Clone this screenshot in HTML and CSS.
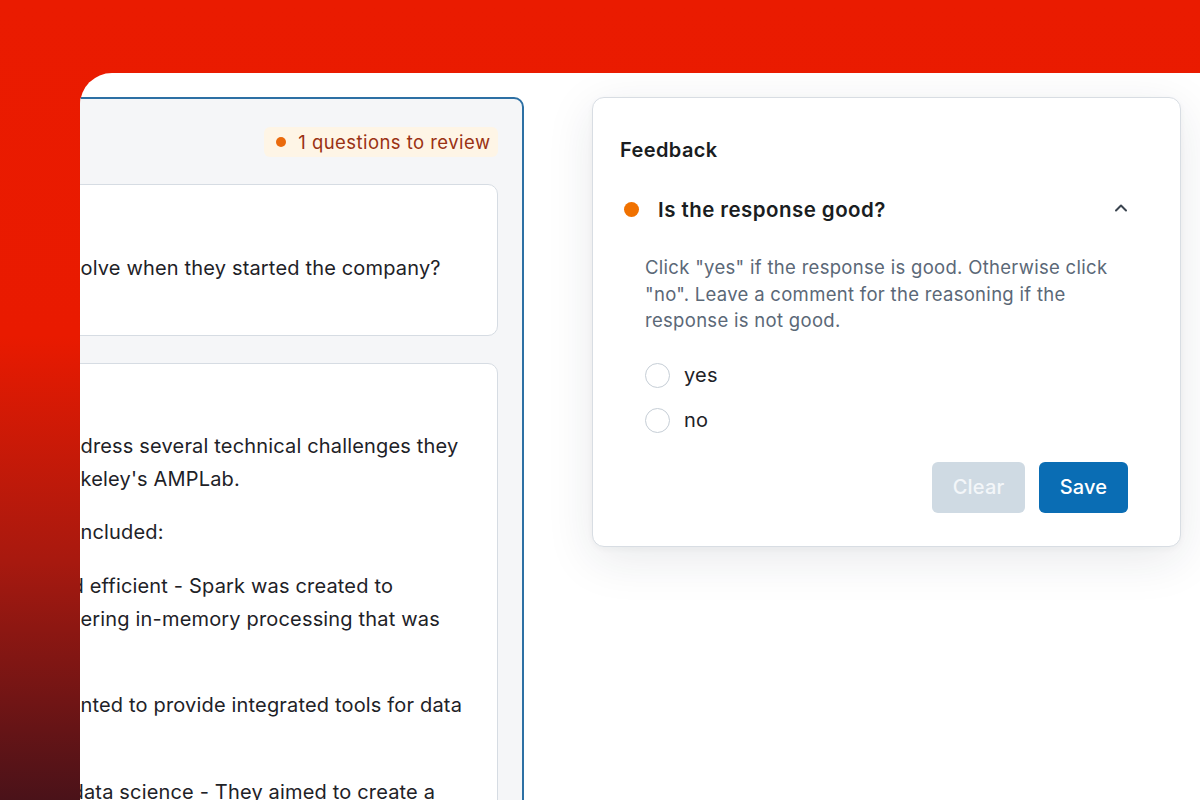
FILE: index.html
```html
<!DOCTYPE html>
<html lang="en">
<head>
<meta charset="utf-8">
<title>Feedback review</title>
<link rel="stylesheet" href="styles.css">
</head>
<body>
<div class="window">
  <section class="review-panel">
    <div class="review-head">
      <span class="badge"><span class="badge-dot"></span>1 questions to review</span>
    </div>
    <div class="card card-question">
      <p class="ln">olve when they started the company?</p>
    </div>
    <div class="card card-answer">
      <p class="para"><span class="ln">dress several technical challenges they</span><span class="ln">keley's AMPLab.</span></p>
      <p class="para"><span class="ln">ncluded:</span></p>
      <p class="para"><span class="ln cut">d efficient - Spark was created to</span><span class="ln">ering in-memory processing that was</span><span class="ln"></span></p>
      <p class="para"><span class="ln">nted to provide integrated tools for data</span><span class="ln"></span></p>
      <p class="para"><span class="ln cut">data science - They aimed to create a</span></p>
    </div>
  </section>

  <section class="feedback-panel">
    <h2 class="fb-title">Feedback</h2>
    <div class="fb-question">
      <span class="q-dot"></span>
      <span class="q-text">Is the response good?</span>
      <svg class="chevron" width="14" height="9" viewBox="0 0 14 9" aria-hidden="true"><path d="M2 7.5 L7 2.5 L12 7.5" fill="none" stroke="#3b4550" stroke-width="2" stroke-linecap="round" stroke-linejoin="round"/></svg>
    </div>
    <div class="fb-body">
      <p class="fb-desc">Click "yes" if the response is good. Otherwise click "no". Leave a comment for the reasoning if the response is not good.</p>
      <div class="options">
        <label class="opt"><span class="radio"></span>yes</label>
        <label class="opt"><span class="radio"></span>no</label>
      </div>
      <div class="actions">
        <button class="btn btn-clear" type="button">Clear</button>
        <button class="btn btn-save" type="button">Save</button>
      </div>
    </div>
  </section>
</div>
</body>
</html>
```

FILE: styles.css
```css
* { box-sizing: border-box; }

html, body {
  margin: 0;
  padding: 0;
}

body {
  width: 1200px;
  height: 800px;
  overflow: hidden;
  font-family: Inter, "Noto Sans", "Liberation Sans", sans-serif;
  color: #1f2329;
  background: linear-gradient(180deg, #ea1b00 0%, #e91a00 42%, #a8190f 70%, #4a1219 100%);
  padding: 73px 0 0 80px;
}

.window {
  height: 727px;
  background: #ffffff;
  border-top-left-radius: 32px;
  overflow: hidden;
  display: flex;
  align-items: flex-start;
  padding-top: 24px;
}

/* left review panel */
.review-panel {
  flex: 0 0 495px;
  margin-left: -51px;
  min-height: 760px;
  background: #f5f6f8;
  border: 2px solid #2d70a4;
  border-radius: 10px;
  padding: 27.5px 24.5px 0 24.5px;
  display: flex;
  flex-direction: column;
  gap: 27px;
}

.review-head {
  display: flex;
  justify-content: flex-end;
}

.badge {
  display: inline-flex;
  align-items: center;
  gap: 12px;
  height: 30px;
  padding: 0 7px 0 12px;
  background: #fef5e6;
  border-radius: 6px;
  color: #9a3113;
  font-size: 18.5px;
  letter-spacing: 0.45px;
  white-space: nowrap;
}

.badge-dot {
  width: 10px;
  height: 10px;
  border-radius: 50%;
  background: #ea6a0c;
}

.card {
  background: #ffffff;
  border: 1px solid #d6dce3;
  border-radius: 10px;
  padding: 0 24px;
  font-size: 20px;
  letter-spacing: 0.17px;
  line-height: 33px;
  color: #1e2227;
}

.card-question {
  height: 152px;
  padding-top: 67px;
}

.card-answer {
  padding-top: 66px;
  min-height: 500px;
}

.ln {
  display: block;
  margin: 0;
  min-height: 33px;
  white-space: nowrap;
}

.ln.cut {
  margin-left: -9px;
}

.para {
  margin: 0 0 20.5px 0;
}

/* right feedback panel */
.feedback-panel {
  flex: 0 0 589px;
  margin-left: 68px;
  height: 450px;
  background: #ffffff;
  border: 1px solid #d8dde3;
  border-radius: 12px;
  box-shadow: 0 12px 48px rgba(30, 40, 60, 0.10), 0 2px 6px rgba(30, 40, 60, 0.04);
  padding: 39px 52px 0 27px;
}

.fb-title {
  margin: 0;
  font-size: 20px;
  letter-spacing: 0.4px;
  line-height: 26px;
  font-weight: 600;
  color: #1a1d21;
}

.fb-question {
  display: flex;
  align-items: center;
  margin-top: 33px;
  height: 26px;
}

.q-dot {
  width: 15px;
  height: 15px;
  border-radius: 50%;
  background: #f07100;
  margin-left: 4px;
}

.q-text {
  margin-left: 19px;
  font-size: 20.5px;
  letter-spacing: 0.45px;
  font-weight: 600;
  color: #1a1d21;
  flex: 1;
}

.chevron {
  margin-top: -4px;
}

.fb-body {
  padding-left: 25px;
}

.fb-desc {
  margin: 32px 0 0 0;
  font-size: 18.5px;
  letter-spacing: 0.3px;
  line-height: 26.5px;
  color: #5b6877;
}

.options {
  margin-top: 29px;
  display: flex;
  flex-direction: column;
  gap: 20px;
}

.opt {
  display: flex;
  align-items: center;
  gap: 14px;
  font-size: 20px;
  letter-spacing: 0.2px;
  line-height: 25px;
  color: #1e2227;
}

.radio {
  width: 25px;
  height: 25px;
  border-radius: 50%;
  border: 1.5px solid #c6ced6;
  background: #fff;
}

.actions {
  margin-top: 29px;
  display: flex;
  justify-content: flex-end;
  gap: 14px;
}

.btn {
  height: 51px;
  border: none;
  border-radius: 6px;
  font-family: inherit;
  font-size: 20px;
  font-weight: 500;
  letter-spacing: 0.2px;
  padding: 0;
  color: #fff;
}

.btn-clear {
  width: 93px;
  background: #cfdae3;
  color: #f3f6f9;
}

.btn-save {
  width: 89px;
  background: #0a6db4;
}
```
